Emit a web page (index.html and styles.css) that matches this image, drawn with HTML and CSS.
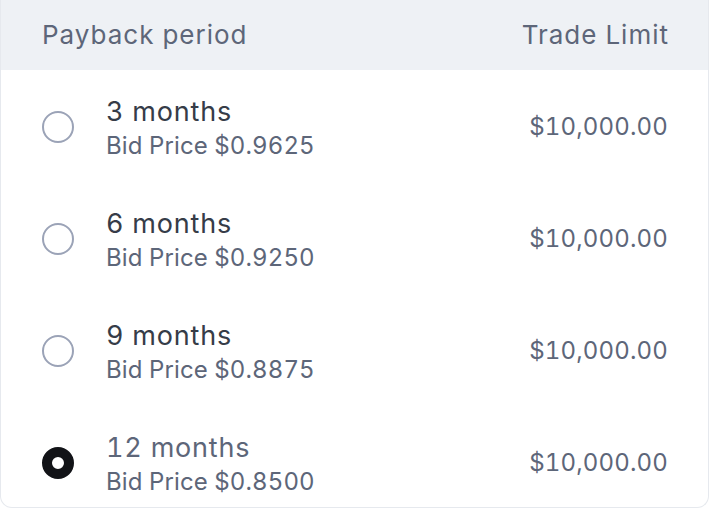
FILE: index.html
```html
<!DOCTYPE html>
<html lang="en">
<head>
<meta charset="utf-8">
<title>Payback period</title>
<link rel="stylesheet" href="styles.css">
</head>
<body>
<div class="card">
  <div class="head">
    <span>Payback period</span>
    <span>Trade Limit</span>
  </div>
  <ul class="rows">
    <li class="row">
      <span class="radio"></span>
      <div class="info">
        <div class="term">3 months</div>
        <div class="bid">Bid Price $0.9625</div>
      </div>
      <div class="limit">$10,000.00</div>
    </li>
    <li class="row">
      <span class="radio"></span>
      <div class="info">
        <div class="term">6 months</div>
        <div class="bid">Bid Price $0.9250</div>
      </div>
      <div class="limit">$10,000.00</div>
    </li>
    <li class="row">
      <span class="radio"></span>
      <div class="info">
        <div class="term">9 months</div>
        <div class="bid">Bid Price $0.8875</div>
      </div>
      <div class="limit">$10,000.00</div>
    </li>
    <li class="row selected">
      <span class="radio"></span>
      <div class="info">
        <div class="term">12 months</div>
        <div class="bid">Bid Price $0.8500</div>
      </div>
      <div class="limit">$10,000.00</div>
    </li>
  </ul>
</div>
</body>
</html>
```

FILE: styles.css
```css
html, body {
  margin: 0;
  padding: 0;
  background: #ffffff;
}

body {
  font-family: Inter, "Noto Sans", sans-serif;
  font-feature-settings: "tnum";
  width: 710px;
  height: 509px;
  overflow: hidden;
}

.card {
  box-sizing: border-box;
  width: 709px;
  height: 508px;
  border: 1px solid #e6e9ee;
  border-top: none;
  border-radius: 0 0 12px 12px;
  background: #ffffff;
  overflow: hidden;
}

.head {
  height: 70px;
  background: #eef1f5;
  display: flex;
  justify-content: space-between;
  align-items: center;
  padding: 0 39px 0 41px;
  font-size: 26px;
  line-height: 32px;
  letter-spacing: 1px;
  color: #5d6679;
}

.rows {
  list-style: none;
  margin: 0;
  padding: 0;
}

.row {
  display: flex;
  align-items: center;
  padding: 26px 40px 21px 41px;
}

.row:last-child {
  padding-bottom: 11px;
}

.radio {
  box-sizing: border-box;
  width: 32px;
  height: 32px;
  border-radius: 50%;
  border: 2.5px solid #9ba3b7;
  flex: none;
  margin-top: -3px;
}

.selected .radio {
  border: 10px solid #121317;
  background: #ffffff;
}

.info {
  margin-left: 32px;
  flex: 1;
}

.term {
  font-size: 27px;
  line-height: 32px;
  letter-spacing: 0.8px;
  color: #363c48;
}

.selected .term {
  color: #5d6679;
}

.bid {
  margin-top: 3px;
  font-size: 24px;
  line-height: 30px;
  letter-spacing: 0.1px;
  color: #5d6679;
}

.limit {
  font-size: 24px;
  line-height: 30px;
  letter-spacing: 0.15px;
  color: #5d6679;
  margin-top: -3px;
}
```
